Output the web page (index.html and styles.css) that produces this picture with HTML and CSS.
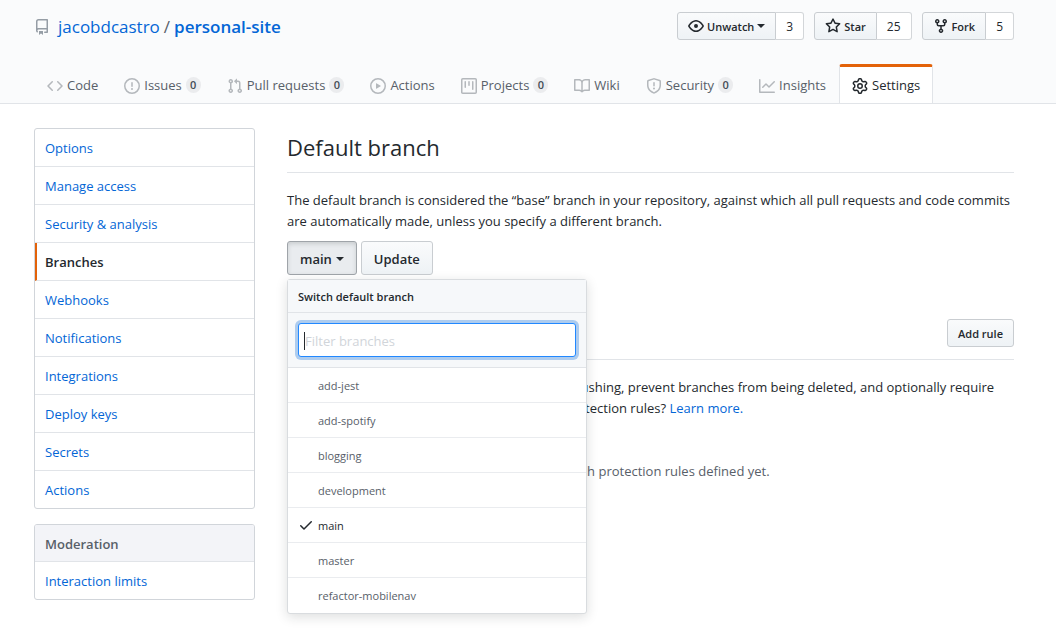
FILE: index.html
```html
<!DOCTYPE html>
<html lang="en">
<head>
<meta charset="utf-8">
<meta name="viewport" content="width=device-width, initial-scale=1">
<title>Branches · jacobdcastro/personal-site</title>
<link rel="stylesheet" href="styles.css">
</head>
<body>
<header class="repo-head">
  <div class="repo-bar">
    <h1 class="repo-title">
      <svg class="icon" viewBox="0 0 16 16" aria-hidden="true"><path fill-rule="evenodd" d="M2 2.5A2.5 2.5 0 014.5 0h8.75a.75.75 0 01.75.75v12.5a.75.75 0 01-.75.75h-2.5a.75.75 0 110-1.5h1.75v-2h-8a1 1 0 00-.714 1.7.75.75 0 01-1.072 1.05A2.495 2.495 0 012 11.5v-9zm10.5-1V9h-8c-.356 0-.694.074-1 .208V2.5a1 1 0 011-1h8zM5 12.25v3.25a.25.25 0 00.4.2l1.45-1.087a.25.25 0 01.3 0L8.6 15.7a.25.25 0 00.4-.2v-3.25a.25.25 0 00-.25-.25h-3.5a.25.25 0 00-.25.25z"/></svg>
      <a href="#">jacobdcastro</a><span class="slash">/</span><a class="repo-name" href="#">personal-site</a>
    </h1>
    <div class="repo-actions">
      <div class="social">
        <button class="btn btn-sm social-btn" type="button"><svg class="icon" viewBox="0 0 16 16" aria-hidden="true"><path fill-rule="evenodd" d="M1.679 7.932c.412-.621 1.242-1.75 2.366-2.717C5.175 4.242 6.527 3.5 8 3.5c1.473 0 2.824.742 3.955 1.715 1.124.967 1.954 2.096 2.366 2.717a.119.119 0 010 .136c-.412.621-1.242 1.75-2.366 2.717C10.825 11.758 9.473 12.5 8 12.5c-1.473 0-2.824-.742-3.955-1.715C2.92 9.818 2.09 8.69 1.679 8.068a.119.119 0 010-.136zM8 2c-1.981 0-3.67.992-4.933 2.078C1.797 5.169.88 6.423.43 7.1a1.619 1.619 0 000 1.798c.45.678 1.367 1.932 2.637 3.024C4.329 13.008 6.019 14 8 14c1.981 0 3.67-.992 4.933-2.078 1.27-1.091 2.187-2.345 2.637-3.023a1.619 1.619 0 000-1.798c-.45-.678-1.367-1.932-2.637-3.023C11.671 2.992 9.981 2 8 2zm0 8a2 2 0 100-4 2 2 0 000 4z"/></svg><span>Unwatch</span><i class="caret"></i></button>
        <a class="count" href="#">3</a>
      </div>
      <div class="social">
        <button class="btn btn-sm social-btn" type="button"><svg class="icon" viewBox="0 0 16 16" aria-hidden="true"><path fill-rule="evenodd" d="M8 .25a.75.75 0 01.673.418l1.882 3.815 4.21.612a.75.75 0 01.416 1.279l-3.046 2.97.719 4.192a.75.75 0 01-1.088.791L8 12.347l-3.766 1.98a.75.75 0 01-1.088-.79l.72-4.194L.818 6.374a.75.75 0 01.416-1.28l4.21-.611L7.327.668A.75.75 0 018 .25zm0 2.445L6.615 5.5a.75.75 0 01-.564.41l-3.097.45 2.24 2.184a.75.75 0 01.216.664l-.528 3.084 2.769-1.456a.75.75 0 01.698 0l2.77 1.456-.53-3.084a.75.75 0 01.216-.664l2.24-2.183-3.096-.45a.75.75 0 01-.564-.41L8 2.694v.001z"/></svg><span>Star</span></button>
        <a class="count" href="#">25</a>
      </div>
      <div class="social">
        <button class="btn btn-sm social-btn" type="button"><svg class="icon" viewBox="0 0 16 16" aria-hidden="true"><path fill-rule="evenodd" d="M5 3.25a.75.75 0 11-1.5 0 .75.75 0 011.5 0zm0 2.122a2.25 2.25 0 10-1.5 0v.878A2.25 2.25 0 005.75 8.5h1.5v2.128a2.251 2.251 0 101.5 0V8.5h1.5a2.25 2.25 0 002.25-2.25v-.878a2.25 2.25 0 10-1.5 0v.878a.75.75 0 01-.75.75h-4.5A.75.75 0 015 6.25v-.878zm3.75 7.378a.75.75 0 11-1.5 0 .75.75 0 011.5 0zm3-8.75a.75.75 0 100-1.5.75.75 0 000 1.5z"/></svg><span>Fork</span></button>
        <a class="count" href="#">5</a>
      </div>
    </div>
  </div>
  <nav class="tabs" aria-label="Repository">
    <a class="tab" href="#"><svg class="icon" viewBox="0 0 16 16" aria-hidden="true"><path fill-rule="evenodd" d="M4.72 3.22a.75.75 0 011.06 1.06L2.06 8l3.72 3.72a.75.75 0 11-1.06 1.06L.47 8.53a.75.75 0 010-1.06l4.25-4.25zm6.56 0a.75.75 0 10-1.06 1.06L13.94 8l-3.72 3.72a.75.75 0 101.06 1.06l4.25-4.25a.75.75 0 000-1.06l-4.25-4.25z"/></svg><span>Code</span></a>
    <a class="tab" href="#"><svg class="icon" viewBox="0 0 16 16" aria-hidden="true"><path fill-rule="evenodd" d="M8 1.5a6.5 6.5 0 100 13 6.5 6.5 0 000-13zM0 8a8 8 0 1116 0A8 8 0 010 8zm9 3a1 1 0 11-2 0 1 1 0 012 0zm-.25-6.25a.75.75 0 00-1.5 0v3.5a.75.75 0 001.5 0v-3.5z"/></svg><span>Issues</span><span class="badge">0</span></a>
    <a class="tab" href="#"><svg class="icon" viewBox="0 0 16 16" aria-hidden="true"><path fill-rule="evenodd" d="M7.177 3.073L9.573.677A.25.25 0 0110 .854v4.792a.25.25 0 01-.427.177L7.177 3.427a.25.25 0 010-.354zM3.75 2.5a.75.75 0 100 1.5.75.75 0 000-1.5zm-2.25.75a2.25 2.25 0 113 2.122v5.256a2.251 2.251 0 11-1.5 0V5.372A2.25 2.25 0 011.5 3.25zM11 2.5h-1V4h1a1 1 0 011 1v5.628a2.251 2.251 0 101.5 0V5A2.5 2.5 0 0011 2.5zm1 10.25a.75.75 0 111.5 0 .75.75 0 01-1.5 0zM3.75 12a.75.75 0 100 1.5.75.75 0 000-1.5z"/></svg><span>Pull requests</span><span class="badge">0</span></a>
    <a class="tab" href="#"><svg class="icon" viewBox="0 0 16 16" aria-hidden="true"><path fill-rule="evenodd" d="M1.5 8a6.5 6.5 0 1113 0 6.5 6.5 0 01-13 0zM8 0a8 8 0 100 16A8 8 0 008 0zM6.379 5.227A.25.25 0 006 5.442v5.117a.25.25 0 00.379.214l4.264-2.559a.25.25 0 000-.428L6.379 5.227z"/></svg><span>Actions</span></a>
    <a class="tab" href="#"><svg class="icon" viewBox="0 0 16 16" aria-hidden="true"><path fill-rule="evenodd" d="M1.75 0A1.75 1.75 0 000 1.75v12.5C0 15.216.784 16 1.75 16h12.5A1.75 1.75 0 0016 14.25V1.75A1.75 1.75 0 0014.25 0H1.75zM1.5 1.75a.25.25 0 01.25-.25h12.5a.25.25 0 01.25.25v12.5a.25.25 0 01-.25.25H1.75a.25.25 0 01-.25-.25V1.75zM11.75 3a.75.75 0 00-.75.75v7.5a.75.75 0 001.5 0v-7.5a.75.75 0 00-.75-.75zm-8.25.75a.75.75 0 011.5 0v5.5a.75.75 0 01-1.5 0v-5.5zM8 3a.75.75 0 00-.75.75v3.5a.75.75 0 001.5 0v-3.5A.75.75 0 008 3z"/></svg><span>Projects</span><span class="badge">0</span></a>
    <a class="tab" href="#"><svg class="icon" viewBox="0 0 16 16" aria-hidden="true"><path fill-rule="evenodd" d="M0 1.75A.75.75 0 01.75 1h4.253c1.227 0 2.317.59 3 1.501A3.744 3.744 0 0111.006 1h4.245a.75.75 0 01.75.75v10.5a.75.75 0 01-.75.75h-4.507a2.25 2.25 0 00-1.591.659l-.622.621a.75.75 0 01-1.06 0l-.622-.621A2.25 2.25 0 005.258 13H.75a.75.75 0 01-.75-.75V1.75zm8.755 3a2.25 2.25 0 012.25-2.25H14.5v9h-3.757c-.71 0-1.4.201-1.992.572l.004-7.322zm-1.504 7.324l.004-5.073-.002-2.253A2.25 2.25 0 005.003 2.5H1.5v9h3.757a3.75 3.75 0 011.994.574z"/></svg><span>Wiki</span></a>
    <a class="tab" href="#"><svg class="icon" viewBox="0 0 16 16" aria-hidden="true"><path fill-rule="evenodd" d="M7.467.133a1.75 1.75 0 011.066 0l5.25 1.68A1.75 1.75 0 0115 3.48V7c0 1.566-.32 3.182-1.303 4.682-.983 1.498-2.585 2.813-5.032 3.855a1.7 1.7 0 01-1.33 0c-2.447-1.042-4.049-2.357-5.032-3.855C1.32 10.182 1 8.566 1 7V3.48a1.75 1.75 0 011.217-1.667l5.25-1.68zm.61 1.429a.25.25 0 00-.153 0l-5.25 1.68a.25.25 0 00-.174.238V7c0 1.358.275 2.666 1.057 3.86.784 1.194 2.121 2.34 4.366 3.297a.2.2 0 00.154 0c2.245-.956 3.582-2.104 4.366-3.298C13.225 9.666 13.5 8.36 13.5 7V3.48a.25.25 0 00-.174-.237l-5.25-1.68zM9 10.5a1 1 0 11-2 0 1 1 0 012 0zm-.25-5.75a.75.75 0 10-1.5 0v3a.75.75 0 001.5 0v-3z"/></svg><span>Security</span><span class="badge">0</span></a>
    <a class="tab" href="#"><svg class="icon" viewBox="0 0 16 16" aria-hidden="true"><path fill-rule="evenodd" d="M1.5 1.75a.75.75 0 00-1.5 0v12.5c0 .414.336.75.75.75h14.5a.75.75 0 000-1.5H1.5V1.75zm14.28 2.53a.75.75 0 00-1.06-1.06L10 7.94 7.53 5.47a.75.75 0 00-1.06 0L3.22 8.72a.75.75 0 001.06 1.06L7 7.06l2.47 2.47a.75.75 0 001.06 0l5.25-5.25z"/></svg><span>Insights</span></a>
    <a class="tab selected" href="#" aria-current="page"><svg class="icon" viewBox="0 0 16 16" aria-hidden="true"><path fill-rule="evenodd" d="M7.429 1.525a6.593 6.593 0 011.142 0c.036.003.108.036.137.146l.289 1.105c.147.56.55.967.997 1.189.174.086.341.183.501.29.417.278.97.423 1.53.27l1.102-.303c.11-.03.175.016.195.046.219.31.41.641.573.989.014.031.022.11-.059.19l-.815.806c-.411.406-.562.957-.53 1.456a4.588 4.588 0 010 .582c-.032.499.119 1.05.53 1.456l.815.806c.08.08.073.159.059.19a6.494 6.494 0 01-.573.99c-.02.029-.086.074-.195.045l-1.103-.303c-.559-.153-1.112-.008-1.529.27-.16.107-.327.204-.5.29-.449.222-.851.628-.998 1.189l-.289 1.105c-.029.11-.101.143-.137.146a6.613 6.613 0 01-1.142 0c-.036-.003-.108-.037-.137-.146l-.289-1.105c-.147-.56-.55-.967-.997-1.189a4.502 4.502 0 01-.501-.29c-.417-.278-.97-.423-1.53-.27l-1.102.303c-.11.03-.175-.016-.195-.046a6.492 6.492 0 01-.573-.989c-.014-.031-.022-.11.059-.19l.815-.806c.411-.406.562-.957.53-1.456a4.587 4.587 0 010-.582c.032-.499-.119-1.05-.53-1.456l-.815-.806c-.08-.08-.073-.159-.059-.19a6.44 6.44 0 01.573-.99c.02-.029.086-.075.195-.045l1.103.303c.559.153 1.112.008 1.529-.27.16-.107.327-.204.5-.29.449-.222.851-.628.998-1.189l.289-1.105c.029-.11.101-.143.137-.146zM8 0c-.236 0-.47.01-.701.03-.743.065-1.29.615-1.458 1.261l-.29 1.106c-.017.066-.078.158-.211.224a5.994 5.994 0 00-.668.386c-.123.082-.233.09-.3.071L3.27 2.776c-.644-.177-1.392.02-1.82.63a7.977 7.977 0 00-.704 1.217c-.315.675-.111 1.422.363 1.891l.815.806c.05.048.098.147.088.294a6.084 6.084 0 000 .772c.01.147-.038.246-.088.294l-.815.806c-.474.469-.678 1.216-.363 1.891.2.428.436.835.704 1.218.428.609 1.176.806 1.82.63l1.103-.303c.066-.019.176-.011.299.071.213.143.436.272.668.386.133.066.194.158.212.224l.289 1.106c.169.646.715 1.196 1.458 1.26a8.094 8.094 0 001.402 0c.743-.064 1.29-.614 1.458-1.26l.29-1.106c.017-.066.078-.158.211-.224a5.98 5.98 0 00.668-.386c.123-.082.233-.09.3-.071l1.102.302c.644.177 1.392-.02 1.82-.63.268-.382.505-.789.704-1.217.315-.675.111-1.422-.364-1.891l-.814-.806c-.05-.048-.098-.147-.088-.294a6.1 6.1 0 000-.772c-.01-.147.039-.246.088-.294l.814-.806c.475-.469.679-1.216.364-1.891a7.992 7.992 0 00-.704-1.218c-.428-.609-1.176-.806-1.82-.63l-1.103.303c-.066.019-.176.011-.299-.071a5.991 5.991 0 00-.668-.386c-.133-.066-.194-.158-.212-.224L10.16 1.29C9.99.645 9.444.095 8.701.031A8.094 8.094 0 008 0zm1.5 8a1.5 1.5 0 11-3 0 1.5 1.5 0 013 0zM11 8a3 3 0 11-6 0 3 3 0 016 0z"/></svg><span>Settings</span></a>
  </nav>
</header>
<div class="layout">
  <aside class="sidebar">
    <nav class="menu" aria-label="Repository settings">
      <a class="menu-item" href="#">Options</a>
      <a class="menu-item" href="#">Manage access</a>
      <a class="menu-item" href="#">Security &amp; analysis</a>
      <a class="menu-item current" href="#" aria-current="page">Branches</a>
      <a class="menu-item" href="#">Webhooks</a>
      <a class="menu-item" href="#">Notifications</a>
      <a class="menu-item" href="#">Integrations</a>
      <a class="menu-item" href="#">Deploy keys</a>
      <a class="menu-item" href="#">Secrets</a>
      <a class="menu-item" href="#">Actions</a>
    </nav>
    <nav class="menu" aria-labelledby="moderation">
      <h3 class="menu-heading" id="moderation">Moderation</h3>
      <a class="menu-item" href="#">Interaction limits</a>
    </nav>
  </aside>
  <main class="content">
    <section>
      <div class="subhead"><h2>Default branch</h2></div>
      <p class="lead">The default branch is considered the “base” branch in your repository, against which all pull requests and code commits are automatically made, unless you specify a different branch.</p>
      <div class="branch-form">
        <div class="dropdown">
          <button class="btn btn-open" type="button" aria-expanded="true"><span>main</span><i class="caret"></i></button>
          <div class="popover">
            <div class="popover-title">Switch default branch</div>
            <div class="filter"><div class="filter-box"><input type="text" placeholder="Filter branches" aria-label="Filter branches"></div></div>
            <div class="branch-list">
              <button class="branch" type="button">add-jest</button>
              <button class="branch" type="button">add-spotify</button>
              <button class="branch" type="button">blogging</button>
              <button class="branch" type="button">development</button>
              <button class="branch checked" type="button"><svg class="icon" viewBox="0 0 16 16" aria-hidden="true"><path fill-rule="evenodd" d="M13.78 4.22a.75.75 0 010 1.06l-7.25 7.25a.75.75 0 01-1.06 0L2.22 9.28a.75.75 0 011.06-1.06L6 10.94l6.72-6.72a.75.75 0 011.06 0z"/></svg>main</button>
              <button class="branch" type="button">master</button>
              <button class="branch" type="button">refactor-mobilenav</button>
            </div>
          </div>
        </div>
        <button class="btn" type="button">Update</button>
      </div>
    </section>
    <section class="rules">
      <div class="subhead"><h2>Branch protection rules</h2><button class="btn btn-sm" type="button">Add rule</button></div>
      <p class="lead">Define branch protection rules to disable force pushing, prevent branches from being deleted, and optionally require status checks before merging. New to branch protection rules? <a href="#">Learn more.</a></p>
      <p class="empty">No branch protection rules defined yet.</p>
    </section>
  </main>
</div>
</body>
</html>
```
FILE: styles.css
```css
* { box-sizing: border-box; }

body {
  margin: 0;
  min-height: 100vh;
  background: #fff;
  color: #24292e;
  font: 13px/21px "Open Sans", "Noto Sans", sans-serif;
}

a { color: #0366d6; text-decoration: none; }
h1, h2, h3, p { margin: 0; font-weight: 400; }
button, input { font: inherit; color: inherit; }
.icon { width: 16px; height: 16px; flex: none; fill: currentColor; }

.repo-head {
  padding: 12px 42px 0 34px;
  background: #fafbfc;
  border-bottom: 1px solid #e1e4e8;
}
.repo-bar {
  display: flex;
  justify-content: space-between;
  align-items: center;
  margin-bottom: 24px;
}
.repo-title {
  display: flex;
  align-items: center;
  padding-top: 2px;
  font-size: 17px;
  line-height: 26px;
}
.repo-title .icon { margin-right: 8px; color: #959da5; }
.slash { margin: 0 4px; color: #586069; }
.repo-name { font-weight: 600; }

.repo-actions { display: flex; gap: 10px; }
.social { display: flex; }

.btn {
  display: inline-flex;
  align-items: center;
  height: 34px;
  padding: 2px 12px 0;
  border: 1px solid #c9cdd1;
  border-radius: 3px;
  background: linear-gradient(#fafbfc, #eff3f6 90%);
  font-weight: 600;
  white-space: nowrap;
}
.btn-sm {
  height: 28px;
  padding: 0 10px;
  font-size: 11px;
}
.social-btn {
  gap: 3px;
  border-radius: 3px 0 0 3px;
}
.btn-open {
  border-color: #9fa4a9;
  background: #e9ecef;
  box-shadow: inset 0 2px 4px rgba(27, 31, 35, 0.15);
}
.caret {
  width: 0;
  border: 4px solid transparent;
  border-top-color: currentColor;
  border-bottom: 0;
}
.btn-open .caret { margin-left: 4px; }
.count {
  display: flex;
  align-items: center;
  padding: 0 10px;
  border: 1px solid #d3d6d9;
  border-left: 0;
  border-radius: 0 3px 3px 0;
  background: #fff;
  color: #24292e;
  font-size: 12px;
}

.tabs { display: flex; margin-bottom: -1px; }
.tab {
  display: flex;
  align-items: center;
  gap: 4px;
  height: 40px;
  padding: 3px 12px 0;
  border: 1px solid transparent;
  border-top: 0;
  color: #586069;
  white-space: nowrap;
}
.tab .icon { margin-top: 2px; color: #b4b8bc; }
.badge {
  min-width: 15px;
  padding: 0 4px;
  border-radius: 8px;
  background: #ebecee;
  color: #444d56;
  font-size: 11px;
  font-weight: 600;
  line-height: 16px;
  text-align: center;
}
.tab.selected {
  padding-top: 0;
  border-color: #e1e4e8;
  border-top: 3px solid #e36209;
  border-radius: 3px 3px 0 0;
  background: #fff;
  color: #24292e;
}
.tab.selected .icon { color: #24292e; }

.layout {
  display: grid;
  grid-template-columns: 221px minmax(0, 1fr);
  gap: 32px;
  padding: 24px 42px 18px 34px;
}
.sidebar { display: grid; gap: 15px; align-content: start; }
.menu { border: 1px solid #d1d5da; border-radius: 3px; overflow: hidden; }
.menu-item, .menu-heading {
  display: block;
  padding: 9px 10px 7px;
  border-bottom: 1px solid #e1e4e8;
  font-size: 13px;
}
.menu-item:last-child { border-bottom: 0; }
.menu-heading {
  padding-bottom: 6px;
  background: #f3f4f8;
  color: #586069;
  font-weight: 600;
}
.current {
  padding-left: 8px;
  border-left: 2px solid #e36209;
  color: #24292e;
  font-weight: 600;
}

.subhead {
  display: flex;
  justify-content: space-between;
  align-items: center;
  min-height: 45px;
  padding-bottom: 6px;
  border-bottom: 1px solid #e1e4e8;
}
.subhead h2 { font-size: 22px; line-height: 32px; }
.lead { margin-top: 17px; }
.branch-form { display: flex; gap: 4px; margin-top: 9px; }
.rules { margin-top: 40px; }
.rules .subhead { padding-bottom: 8px; }
.empty { margin-top: 42px; color: #586069; text-align: center; }

.dropdown { position: relative; }
.popover {
  position: absolute;
  top: 100%;
  left: 0;
  z-index: 10;
  width: 300px;
  margin-top: 4px;
  border: 1px solid #d9dcdf;
  border-radius: 3px;
  background: #fff;
  box-shadow: 0 3px 12px rgba(27, 31, 35, 0.15);
  font-size: 11px;
}
.popover-title {
  padding: 6px 10px 5px;
  border-bottom: 1px solid #e1e4e8;
  background: #f6f8fa;
  font-weight: 600;
}
.filter {
  padding: 10px;
  border-bottom: 1px solid #e1e4e8;
  background: #f6f8fa;
}
.filter-box { position: relative; }
.filter-box::before {
  content: "";
  position: absolute;
  top: 9px;
  left: 6px;
  width: 1px;
  height: 18px;
  background: #24292e;
}
.filter input {
  display: block;
  width: 100%;
  height: 34px;
  padding: 2px 6px 0;
  border: 1px solid #2188ff;
  border-radius: 3px;
  outline: none;
  background: #fff;
  box-shadow: 0 0 0 3px rgba(3, 102, 214, 0.3);
  font-size: 13px;
}
.filter input::placeholder { color: #d1d5da; opacity: 1; }
.branch {
  display: flex;
  align-items: center;
  width: 100%;
  height: 35px;
  padding: 0 10px 0 30px;
  border: 0;
  border-bottom: 1px solid #eaecef;
  background: none;
  color: #586069;
  text-align: left;
}
.branch:last-child { border-bottom: 0; }
.checked { gap: 4px; padding-left: 10px; color: #24292e; }
```
